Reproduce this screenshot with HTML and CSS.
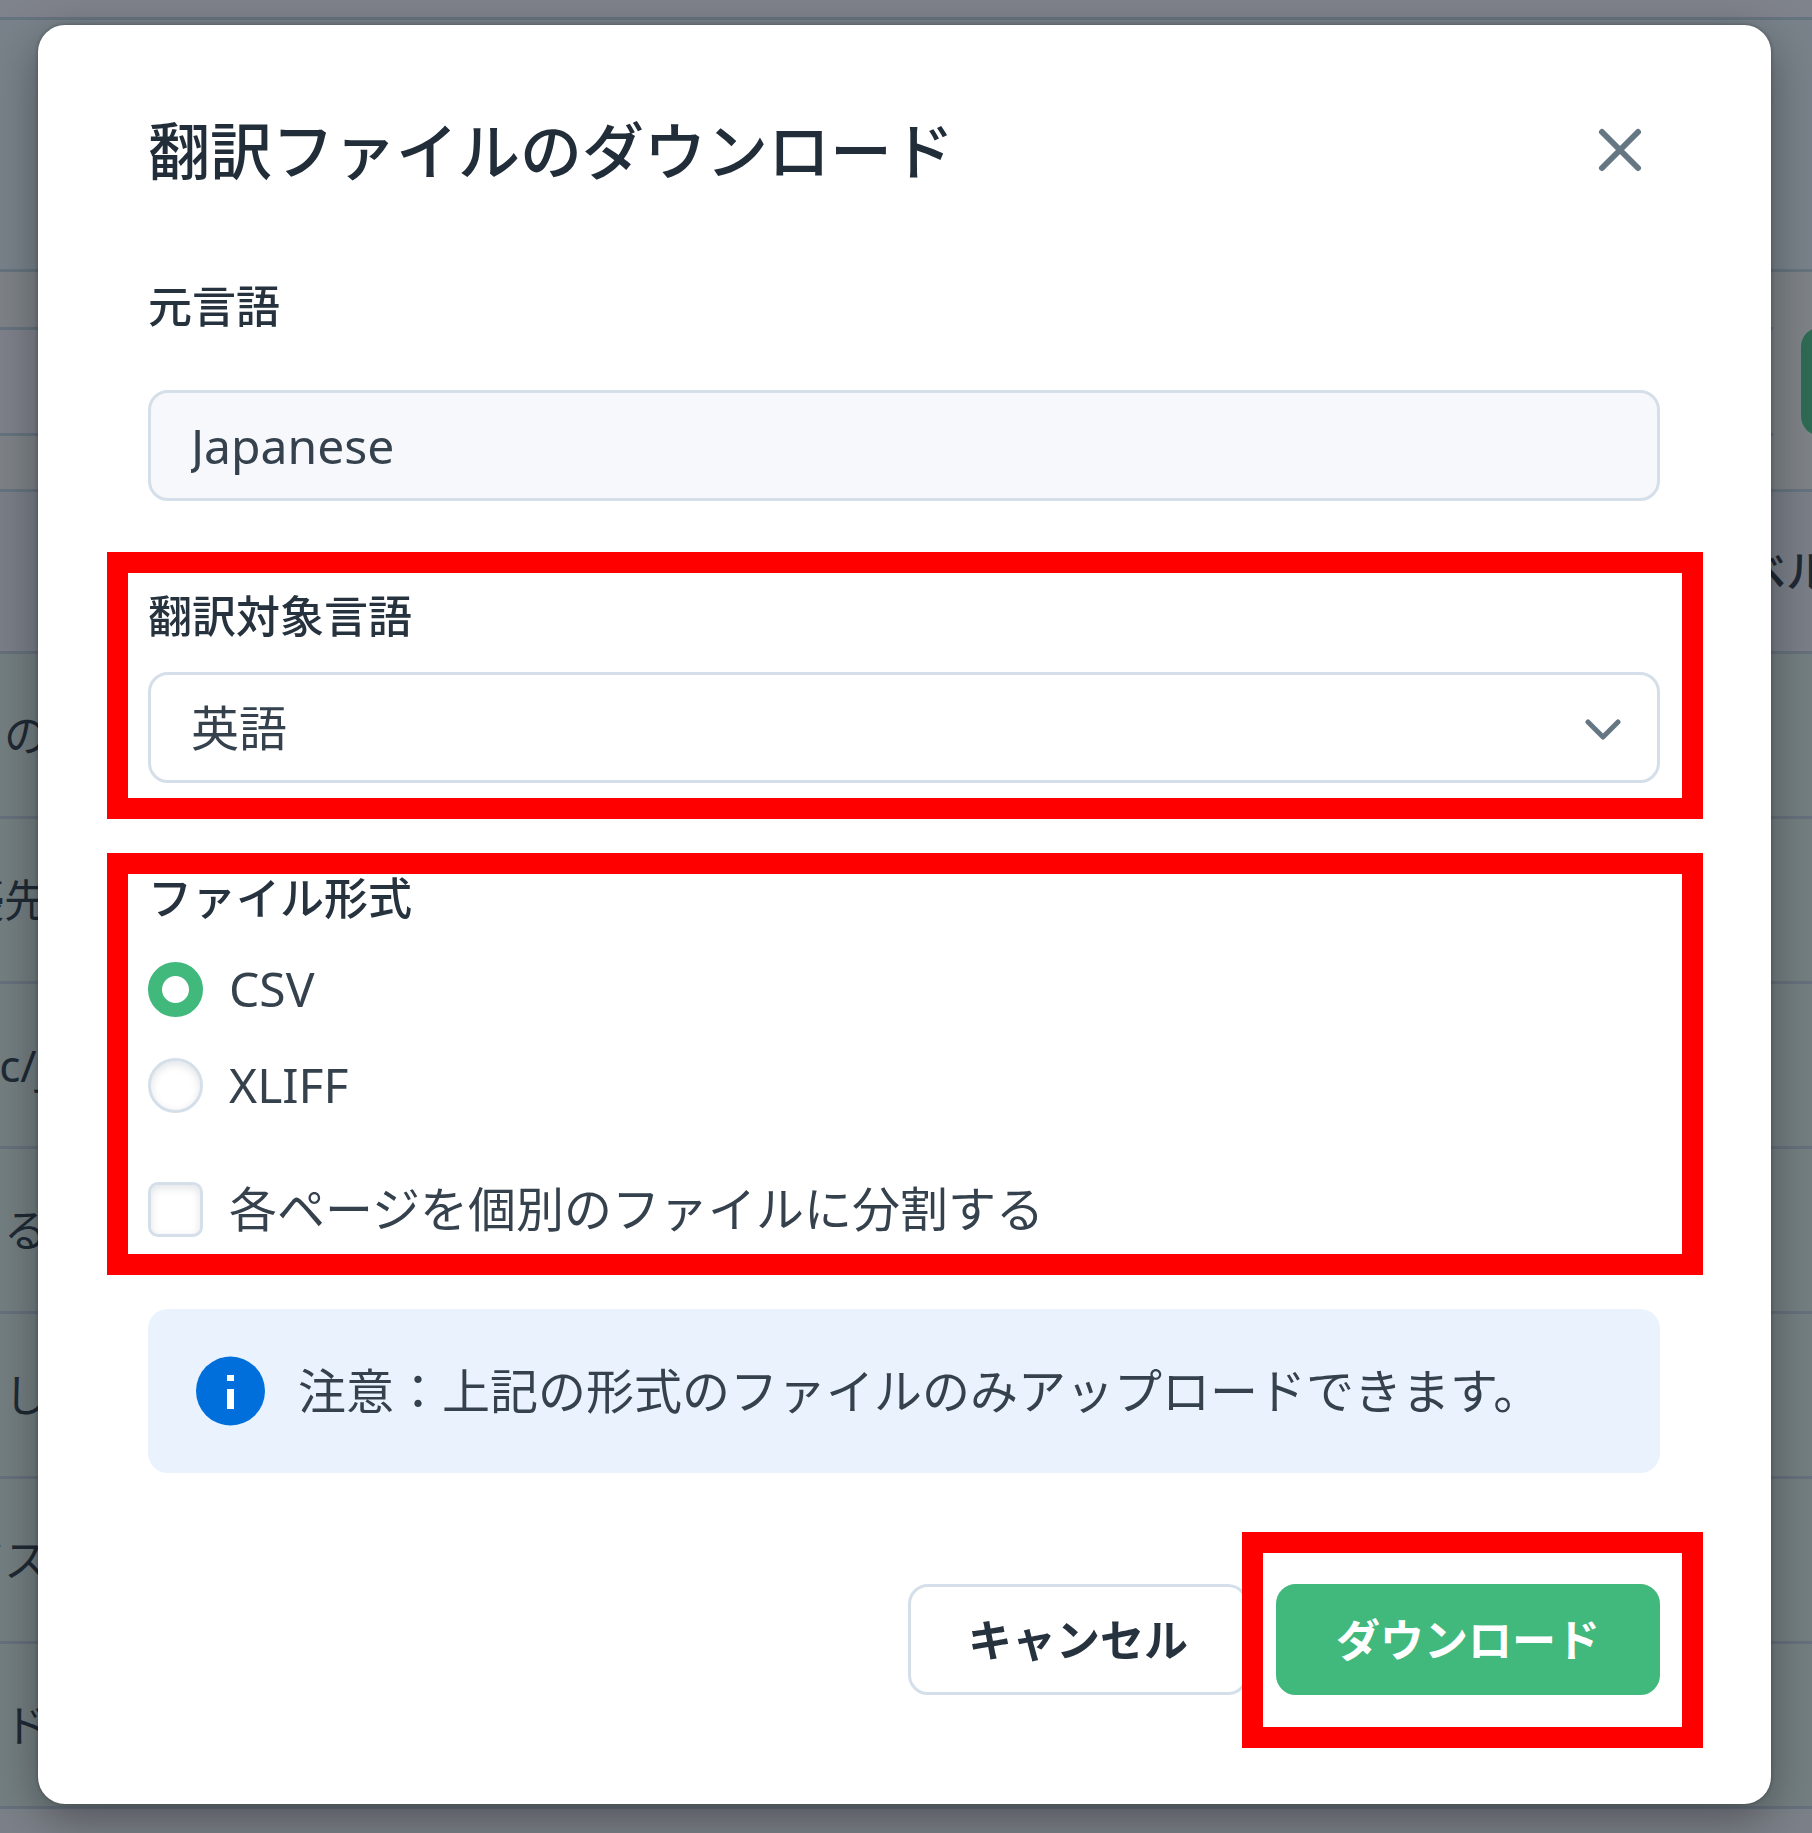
FILE: index.html
```html
<!DOCTYPE html>
<html lang="ja">
<head>
<meta charset="utf-8">
<meta name="viewport" content="width=device-width, initial-scale=1">
<title>翻訳ファイルのダウンロード</title>
<link rel="stylesheet" href="styles.css">
</head>
<body>
<main class="page" inert>
  <div class="page-top"></div>
  <div class="page-heading"></div>
  <div class="toolbar">
    <input class="toolbar-search" type="search" aria-label="検索">
    <button class="toolbar-action" type="button" aria-label="追加"></button>
  </div>
  <table class="articles">
    <thead>
      <tr><th class="name"></th><th></th><th class="level">レベル</th></tr>
    </thead>
    <tbody>
      <tr><td class="name"><span>の</span></td><td></td><td></td></tr>
      <tr><td class="name"><span>優先</span></td><td></td><td></td></tr>
      <tr><td class="name"><span>c/j</span></td><td></td><td></td></tr>
      <tr><td class="name"><span>る</span></td><td></td><td></td></tr>
      <tr><td class="name"><span>し</span></td><td></td><td></td></tr>
      <tr><td class="name"><span>ビス</span></td><td></td><td></td></tr>
      <tr><td class="name"><span>ド</span></td><td></td><td></td></tr>
    </tbody>
  </table>
</main>

<div class="overlay">
  <form class="dialog" role="dialog" aria-modal="true" aria-labelledby="dialog-title">
    <header class="dialog-header">
      <h1 class="dialog-title" id="dialog-title">翻訳ファイルのダウンロード</h1>
      <button class="close" type="button" aria-label="閉じる">
        <svg viewBox="0 0 48 48" width="48" height="48" aria-hidden="true"><path d="M6 5 42 41M42 5 6 41"/></svg>
      </button>
    </header>

    <div class="field field-source">
      <label class="label" for="source">元言語</label>
      <input class="control" id="source" type="text" value="Japanese" readonly>
    </div>

    <div class="field field-target marked">
      <label class="label" for="target">翻訳対象言語</label>
      <div class="select-wrap">
        <select class="control" id="target"><option>英語</option></select>
        <svg class="chevron" viewBox="0 0 40 24" width="40" height="24" aria-hidden="true"><path d="M5 3 20 18 35 3"/></svg>
      </div>
    </div>

    <fieldset class="format marked">
      <legend class="label">ファイル形式</legend>
      <label class="choice"><input class="radio" type="radio" name="format" checked>CSV</label>
      <label class="choice"><input class="radio" type="radio" name="format">XLIFF</label>
      <label class="choice choice-split"><input class="check" type="checkbox">各ページを個別のファイルに分割する</label>
    </fieldset>

    <div class="notice">
      <svg viewBox="0 0 70 70" width="70" height="70" aria-hidden="true">
        <circle cx="34.5" cy="35" r="34.5" fill="#006fdc"/>
        <path d="M31 19h7v6h-7zM31 33h7v20h-7z" fill="#fff"/>
      </svg>
      <p>注意：上記の形式のファイルのみアップロードできます。</p>
    </div>

    <footer class="actions">
      <button class="button" type="button">キャンセル</button>
      <div class="marked">
        <button class="button button-primary" type="submit">ダウンロード</button>
      </div>
    </footer>
  </form>
</div>
</body>
</html>
```

FILE: styles.css
```css
:root {
  --ink: #35424e;
  --ink-strong: #26333f;
  --line: #d5dfe9;
  --green: #41b87c;
  --dim-line: #66747f;
}

* {
  box-sizing: border-box;
}

body {
  margin: 0;
  min-height: 100vh;
  overflow: hidden;
  background: #7c8088;
  color: var(--ink);
  font: 400 48px/64px "Noto Sans", "Noto Sans CJK JP", sans-serif;
}

input,
select,
button {
  font: inherit;
  color: inherit;
}

/* Dimmed page */
.page {
  color: #1f2a35;
  font-size: 44px;
}

.page-top {
  height: 20px;
  background: #7f838b;
  border-bottom: 3px solid var(--dim-line);
}

.page-heading {
  height: 252px;
  background: #79828a;
  border-bottom: 3px solid var(--dim-line);
}

.toolbar {
  display: flex;
  gap: 28px;
  height: 220px;
  padding: 55px 0 53px;
  overflow: hidden;
  background: #7e8388;
  border-bottom: 3px solid var(--dim-line);
}

.toolbar-search {
  flex: 1;
  min-width: 0;
  background: #7f828b;
  border: solid var(--dim-line);
  border-width: 3px 0;
}

.toolbar-action {
  flex: none;
  width: 200px;
  margin-right: -189px;
  border: 0;
  border-radius: 20px;
  background: #2f6b54;
}

.articles {
  width: 100%;
  table-layout: fixed;
  border-collapse: collapse;
}

.articles th,
.articles td {
  height: 165px;
  padding: 0;
  overflow: hidden;
  white-space: nowrap;
  background: #747f82;
  border-bottom: 3px solid #66717d;
}

.articles th {
  height: 160px;
  background: #7a7f88;
}

.articles .name {
  width: 48px;
}

.articles .name span {
  display: flex;
  justify-content: flex-end;
}

.articles .level {
  width: 114px;
  text-align: left;
  font-weight: 500;
}

/* Dialog */
.overlay {
  position: fixed;
  inset: 0;
  display: flex;
  align-items: flex-start;
  padding: 25px 41px 28px 38px;
}

.dialog {
  flex: 1;
  min-width: 0;
  padding: 86px 111px 109px 110px;
  border-radius: 27px;
  background: #fff;
  box-shadow: 0 14px 48px rgba(0, 0, 0, 0.36), 0 0 4px rgba(0, 0, 0, 0.3);
}

.dialog-header {
  display: flex;
  align-items: center;
  justify-content: space-between;
}

.dialog-title {
  margin: 0;
  font-size: 62px;
  line-height: 80px;
  font-weight: 500;
  color: #212e3a;
}

.close {
  display: grid;
  place-items: center;
  width: 80px;
  height: 80px;
  padding: 0;
  border: 0;
  background: none;
}

.close svg,
.chevron {
  fill: none;
  stroke: #667784;
  stroke-width: 6;
  stroke-linecap: round;
  stroke-linejoin: round;
}

.label {
  display: block;
  padding: 0;
  color: var(--ink-strong);
  font-size: 44px;
  font-weight: 500;
}

.field {
  display: flex;
  flex-direction: column;
  gap: 24px;
}

.field-source {
  gap: 52px;
  margin-top: 83px;
}

.field-target {
  margin-top: 83px;
}

.control {
  display: block;
  width: 100%;
  height: 111px;
  margin: 0;
  padding: 0 40px;
  border: 3px solid var(--line);
  border-radius: 20px;
  background: #fff;
  appearance: none;
}

.control[readonly] {
  background: #f6f8fb;
}

.select-wrap {
  position: relative;
}

.chevron {
  position: absolute;
  top: 47px;
  right: 37px;
  stroke-width: 5;
  pointer-events: none;
}

/* Red outline around the parts the guide talks about */
.marked {
  position: relative;
}

.marked::after {
  content: "";
  position: absolute;
  inset: -32px -43px -36px -41px;
  border: 21px solid #f00;
  pointer-events: none;
}

.format {
  min-width: 0;
  margin: 83px 0 0;
  padding: 0;
  border: 0;
}

/* Positioned from below the legend, so the top reaches over it */
.format::after {
  inset: -77px -43px -34px -41px;
}

.choice {
  display: flex;
  align-items: center;
  gap: 26px;
  margin-top: 32px;
}

.label + .choice {
  margin-top: 27px;
}

.choice-split {
  margin-top: 60px;
}

.radio,
.check {
  flex: none;
  width: 55px;
  height: 55px;
  margin: 0;
  border: 3px solid var(--line);
  background: #fff;
  box-shadow: inset 0 3px 8px rgba(40, 60, 80, 0.14);
  appearance: none;
}

.radio {
  border-radius: 50%;
}

.radio:checked {
  border: 14px solid var(--green);
  box-shadow: none;
}

.check {
  border-radius: 10px;
}

.notice {
  display: flex;
  align-items: center;
  gap: 32px;
  margin-top: 68px;
  padding: 47px 48px;
  border-radius: 20px;
  background: #eaf3fd;
}

.notice svg {
  flex: none;
}

.notice p {
  margin: 0;
}

.actions {
  display: flex;
  justify-content: flex-end;
  gap: 28px;
  margin-top: 111px;
}

.button {
  display: block;
  height: 111px;
  padding: 0 57px;
  border: 3px solid var(--line);
  border-radius: 20px;
  background: #fff;
  color: var(--ink-strong);
  font-size: 44px;
  font-weight: 700;
}

.button-primary {
  border-color: var(--green);
  background: var(--green);
  color: #fff;
}

.actions .marked::after {
  inset: -52px -43px -53px -34px;
}
```
